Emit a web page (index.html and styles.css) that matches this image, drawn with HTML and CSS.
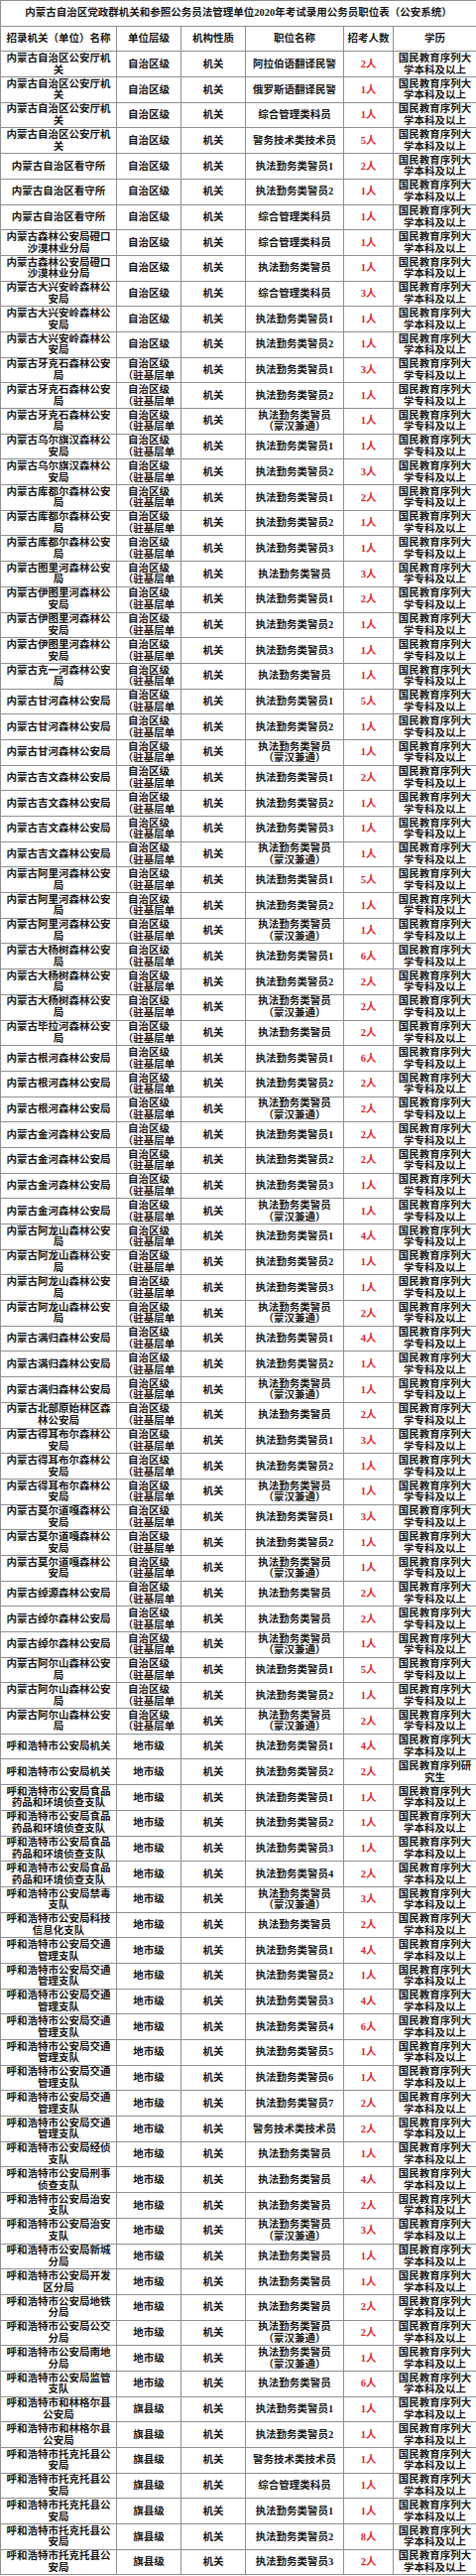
FILE: index.html
```html
<!DOCTYPE html>
<html lang="zh-CN">
<head>
<meta charset="utf-8">
<title>职位表（公安系统）</title>
<link rel="stylesheet" href="styles.css">
</head>
<body>
<table class="jobs">
<colgroup><col class="c1"><col class="c2"><col class="c3"><col class="c4"><col class="c5"><col class="c6"></colgroup>
<thead>
<tr><th colspan="6" class="title">内蒙古自治区党政群机关和参照公务员法管理单位2020年考试录用公务员职位表（公安系统）</th></tr>
<tr><th>招录机关（单位）名称</th><th>单位层级</th><th>机构性质</th><th>职位名称</th><th>招考人数</th><th>学历</th></tr>
</thead>
<tbody>
<tr><td>内蒙古自治区公安厅机关</td><td>自治区级</td><td>机关</td><td>阿拉伯语翻译民警</td><td class="n">2人</td><td>国民教育序列大学本科及以上</td></tr>
<tr><td>内蒙古自治区公安厅机关</td><td>自治区级</td><td>机关</td><td>俄罗斯语翻译民警</td><td class="n">1人</td><td>国民教育序列大学本科及以上</td></tr>
<tr><td>内蒙古自治区公安厅机关</td><td>自治区级</td><td>机关</td><td>综合管理类科员</td><td class="n">1人</td><td>国民教育序列大学本科及以上</td></tr>
<tr><td>内蒙古自治区公安厅机关</td><td>自治区级</td><td>机关</td><td>警务技术类技术员</td><td class="n">5人</td><td>国民教育序列大学本科及以上</td></tr>
<tr><td>内蒙古自治区看守所</td><td>自治区级</td><td>机关</td><td>执法勤务类警员1</td><td class="n">2人</td><td>国民教育序列大学本科及以上</td></tr>
<tr><td>内蒙古自治区看守所</td><td>自治区级</td><td>机关</td><td>执法勤务类警员2</td><td class="n">1人</td><td>国民教育序列大学本科及以上</td></tr>
<tr><td>内蒙古自治区看守所</td><td>自治区级</td><td>机关</td><td>综合管理类科员</td><td class="n">1人</td><td>国民教育序列大学本科及以上</td></tr>
<tr><td>内蒙古森林公安局磴口沙漠林业分局</td><td>自治区级</td><td>机关</td><td>综合管理类科员</td><td class="n">1人</td><td>国民教育序列大学本科及以上</td></tr>
<tr><td>内蒙古森林公安局磴口沙漠林业分局</td><td>自治区级</td><td>机关</td><td>执法勤务类警员</td><td class="n">1人</td><td>国民教育序列大学本科及以上</td></tr>
<tr><td>内蒙古大兴安岭森林公安局</td><td>自治区级</td><td>机关</td><td>综合管理类科员</td><td class="n">3人</td><td>国民教育序列大学本科及以上</td></tr>
<tr><td>内蒙古大兴安岭森林公安局</td><td>自治区级</td><td>机关</td><td>执法勤务类警员1</td><td class="n">1人</td><td>国民教育序列大学本科及以上</td></tr>
<tr><td>内蒙古大兴安岭森林公安局</td><td>自治区级</td><td>机关</td><td>执法勤务类警员2</td><td class="n">1人</td><td>国民教育序列大学本科及以上</td></tr>
<tr><td>内蒙古牙克石森林公安局</td><td>自治区级<br>（驻基层单</td><td>机关</td><td>执法勤务类警员1</td><td class="n">3人</td><td>国民教育序列大学专科及以上</td></tr>
<tr><td>内蒙古牙克石森林公安局</td><td>自治区级<br>（驻基层单</td><td>机关</td><td>执法勤务类警员2</td><td class="n">1人</td><td>国民教育序列大学专科及以上</td></tr>
<tr><td>内蒙古牙克石森林公安局</td><td>自治区级<br>（驻基层单</td><td>机关</td><td>执法勤务类警员<br>（蒙汉兼通）</td><td class="n">1人</td><td>国民教育序列大学专科及以上</td></tr>
<tr><td>内蒙古乌尔旗汉森林公安局</td><td>自治区级<br>（驻基层单</td><td>机关</td><td>执法勤务类警员1</td><td class="n">1人</td><td>国民教育序列大学专科及以上</td></tr>
<tr><td>内蒙古乌尔旗汉森林公安局</td><td>自治区级<br>（驻基层单</td><td>机关</td><td>执法勤务类警员2</td><td class="n">3人</td><td>国民教育序列大学专科及以上</td></tr>
<tr><td>内蒙古库都尔森林公安局</td><td>自治区级<br>（驻基层单</td><td>机关</td><td>执法勤务类警员1</td><td class="n">2人</td><td>国民教育序列大学专科及以上</td></tr>
<tr><td>内蒙古库都尔森林公安局</td><td>自治区级<br>（驻基层单</td><td>机关</td><td>执法勤务类警员2</td><td class="n">1人</td><td>国民教育序列大学专科及以上</td></tr>
<tr><td>内蒙古库都尔森林公安局</td><td>自治区级<br>（驻基层单</td><td>机关</td><td>执法勤务类警员3</td><td class="n">1人</td><td>国民教育序列大学专科及以上</td></tr>
<tr><td>内蒙古图里河森林公安局</td><td>自治区级<br>（驻基层单</td><td>机关</td><td>执法勤务类警员</td><td class="n">3人</td><td>国民教育序列大学专科及以上</td></tr>
<tr><td>内蒙古伊图里河森林公安局</td><td>自治区级<br>（驻基层单</td><td>机关</td><td>执法勤务类警员1</td><td class="n">2人</td><td>国民教育序列大学专科及以上</td></tr>
<tr><td>内蒙古伊图里河森林公安局</td><td>自治区级<br>（驻基层单</td><td>机关</td><td>执法勤务类警员2</td><td class="n">1人</td><td>国民教育序列大学专科及以上</td></tr>
<tr><td>内蒙古伊图里河森林公安局</td><td>自治区级<br>（驻基层单</td><td>机关</td><td>执法勤务类警员3</td><td class="n">1人</td><td>国民教育序列大学专科及以上</td></tr>
<tr><td>内蒙古克一河森林公安局</td><td>自治区级<br>（驻基层单</td><td>机关</td><td>执法勤务类警员</td><td class="n">1人</td><td>国民教育序列大学专科及以上</td></tr>
<tr><td>内蒙古甘河森林公安局</td><td>自治区级<br>（驻基层单</td><td>机关</td><td>执法勤务类警员1</td><td class="n">5人</td><td>国民教育序列大学专科及以上</td></tr>
<tr><td>内蒙古甘河森林公安局</td><td>自治区级<br>（驻基层单</td><td>机关</td><td>执法勤务类警员2</td><td class="n">1人</td><td>国民教育序列大学专科及以上</td></tr>
<tr><td>内蒙古甘河森林公安局</td><td>自治区级<br>（驻基层单</td><td>机关</td><td>执法勤务类警员<br>（蒙汉兼通）</td><td class="n">1人</td><td>国民教育序列大学专科及以上</td></tr>
<tr><td>内蒙古吉文森林公安局</td><td>自治区级<br>（驻基层单</td><td>机关</td><td>执法勤务类警员1</td><td class="n">2人</td><td>国民教育序列大学专科及以上</td></tr>
<tr><td>内蒙古吉文森林公安局</td><td>自治区级<br>（驻基层单</td><td>机关</td><td>执法勤务类警员2</td><td class="n">1人</td><td>国民教育序列大学专科及以上</td></tr>
<tr><td>内蒙古吉文森林公安局</td><td>自治区级<br>（驻基层单</td><td>机关</td><td>执法勤务类警员3</td><td class="n">1人</td><td>国民教育序列大学专科及以上</td></tr>
<tr><td>内蒙古吉文森林公安局</td><td>自治区级<br>（驻基层单</td><td>机关</td><td>执法勤务类警员<br>（蒙汉兼通）</td><td class="n">1人</td><td>国民教育序列大学专科及以上</td></tr>
<tr><td>内蒙古阿里河森林公安局</td><td>自治区级<br>（驻基层单</td><td>机关</td><td>执法勤务类警员1</td><td class="n">5人</td><td>国民教育序列大学专科及以上</td></tr>
<tr><td>内蒙古阿里河森林公安局</td><td>自治区级<br>（驻基层单</td><td>机关</td><td>执法勤务类警员2</td><td class="n">1人</td><td>国民教育序列大学专科及以上</td></tr>
<tr><td>内蒙古阿里河森林公安局</td><td>自治区级<br>（驻基层单</td><td>机关</td><td>执法勤务类警员<br>（蒙汉兼通）</td><td class="n">1人</td><td>国民教育序列大学专科及以上</td></tr>
<tr><td>内蒙古大杨树森林公安局</td><td>自治区级<br>（驻基层单</td><td>机关</td><td>执法勤务类警员1</td><td class="n">6人</td><td>国民教育序列大学专科及以上</td></tr>
<tr><td>内蒙古大杨树森林公安局</td><td>自治区级<br>（驻基层单</td><td>机关</td><td>执法勤务类警员2</td><td class="n">2人</td><td>国民教育序列大学专科及以上</td></tr>
<tr><td>内蒙古大杨树森林公安局</td><td>自治区级<br>（驻基层单</td><td>机关</td><td>执法勤务类警员<br>（蒙汉兼通）</td><td class="n">2人</td><td>国民教育序列大学专科及以上</td></tr>
<tr><td>内蒙古毕拉河森林公安局</td><td>自治区级<br>（驻基层单</td><td>机关</td><td>执法勤务类警员</td><td class="n">2人</td><td>国民教育序列大学专科及以上</td></tr>
<tr><td>内蒙古根河森林公安局</td><td>自治区级<br>（驻基层单</td><td>机关</td><td>执法勤务类警员1</td><td class="n">6人</td><td>国民教育序列大学专科及以上</td></tr>
<tr><td>内蒙古根河森林公安局</td><td>自治区级<br>（驻基层单</td><td>机关</td><td>执法勤务类警员2</td><td class="n">2人</td><td>国民教育序列大学专科及以上</td></tr>
<tr><td>内蒙古根河森林公安局</td><td>自治区级<br>（驻基层单</td><td>机关</td><td>执法勤务类警员<br>（蒙汉兼通）</td><td class="n">2人</td><td>国民教育序列大学专科及以上</td></tr>
<tr><td>内蒙古金河森林公安局</td><td>自治区级<br>（驻基层单</td><td>机关</td><td>执法勤务类警员1</td><td class="n">2人</td><td>国民教育序列大学专科及以上</td></tr>
<tr><td>内蒙古金河森林公安局</td><td>自治区级<br>（驻基层单</td><td>机关</td><td>执法勤务类警员2</td><td class="n">2人</td><td>国民教育序列大学专科及以上</td></tr>
<tr><td>内蒙古金河森林公安局</td><td>自治区级<br>（驻基层单</td><td>机关</td><td>执法勤务类警员3</td><td class="n">1人</td><td>国民教育序列大学专科及以上</td></tr>
<tr><td>内蒙古金河森林公安局</td><td>自治区级<br>（驻基层单</td><td>机关</td><td>执法勤务类警员<br>（蒙汉兼通）</td><td class="n">1人</td><td>国民教育序列大学专科及以上</td></tr>
<tr><td>内蒙古阿龙山森林公安局</td><td>自治区级<br>（驻基层单</td><td>机关</td><td>执法勤务类警员1</td><td class="n">4人</td><td>国民教育序列大学专科及以上</td></tr>
<tr><td>内蒙古阿龙山森林公安局</td><td>自治区级<br>（驻基层单</td><td>机关</td><td>执法勤务类警员2</td><td class="n">1人</td><td>国民教育序列大学专科及以上</td></tr>
<tr><td>内蒙古阿龙山森林公安局</td><td>自治区级<br>（驻基层单</td><td>机关</td><td>执法勤务类警员3</td><td class="n">1人</td><td>国民教育序列大学专科及以上</td></tr>
<tr><td>内蒙古阿龙山森林公安局</td><td>自治区级<br>（驻基层单</td><td>机关</td><td>执法勤务类警员<br>（蒙汉兼通）</td><td class="n">2人</td><td>国民教育序列大学专科及以上</td></tr>
<tr><td>内蒙古满归森林公安局</td><td>自治区级<br>（驻基层单</td><td>机关</td><td>执法勤务类警员1</td><td class="n">4人</td><td>国民教育序列大学专科及以上</td></tr>
<tr><td>内蒙古满归森林公安局</td><td>自治区级<br>（驻基层单</td><td>机关</td><td>执法勤务类警员2</td><td class="n">1人</td><td>国民教育序列大学专科及以上</td></tr>
<tr><td>内蒙古满归森林公安局</td><td>自治区级<br>（驻基层单</td><td>机关</td><td>执法勤务类警员<br>（蒙汉兼通）</td><td class="n">1人</td><td>国民教育序列大学专科及以上</td></tr>
<tr><td>内蒙古北部原始林区森林公安局</td><td>自治区级<br>（驻基层单</td><td>机关</td><td>执法勤务类警员</td><td class="n">2人</td><td>国民教育序列大学专科及以上</td></tr>
<tr><td>内蒙古得耳布尔森林公安局</td><td>自治区级<br>（驻基层单</td><td>机关</td><td>执法勤务类警员1</td><td class="n">3人</td><td>国民教育序列大学专科及以上</td></tr>
<tr><td>内蒙古得耳布尔森林公安局</td><td>自治区级<br>（驻基层单</td><td>机关</td><td>执法勤务类警员2</td><td class="n">1人</td><td>国民教育序列大学专科及以上</td></tr>
<tr><td>内蒙古得耳布尔森林公安局</td><td>自治区级<br>（驻基层单</td><td>机关</td><td>执法勤务类警员<br>（蒙汉兼通）</td><td class="n">1人</td><td>国民教育序列大学专科及以上</td></tr>
<tr><td>内蒙古莫尔道嘎森林公安局</td><td>自治区级<br>（驻基层单</td><td>机关</td><td>执法勤务类警员1</td><td class="n">3人</td><td>国民教育序列大学专科及以上</td></tr>
<tr><td>内蒙古莫尔道嘎森林公安局</td><td>自治区级<br>（驻基层单</td><td>机关</td><td>执法勤务类警员2</td><td class="n">1人</td><td>国民教育序列大学专科及以上</td></tr>
<tr><td>内蒙古莫尔道嘎森林公安局</td><td>自治区级<br>（驻基层单</td><td>机关</td><td>执法勤务类警员<br>（蒙汉兼通）</td><td class="n">1人</td><td>国民教育序列大学专科及以上</td></tr>
<tr><td>内蒙古绰源森林公安局</td><td>自治区级<br>（驻基层单</td><td>机关</td><td>执法勤务类警员</td><td class="n">2人</td><td>国民教育序列大学专科及以上</td></tr>
<tr><td>内蒙古绰尔森林公安局</td><td>自治区级<br>（驻基层单</td><td>机关</td><td>执法勤务类警员</td><td class="n">2人</td><td>国民教育序列大学专科及以上</td></tr>
<tr><td>内蒙古绰尔森林公安局</td><td>自治区级<br>（驻基层单</td><td>机关</td><td>执法勤务类警员<br>（蒙汉兼通）</td><td class="n">1人</td><td>国民教育序列大学专科及以上</td></tr>
<tr><td>内蒙古阿尔山森林公安局</td><td>自治区级<br>（驻基层单</td><td>机关</td><td>执法勤务类警员1</td><td class="n">5人</td><td>国民教育序列大学专科及以上</td></tr>
<tr><td>内蒙古阿尔山森林公安局</td><td>自治区级<br>（驻基层单</td><td>机关</td><td>执法勤务类警员2</td><td class="n">1人</td><td>国民教育序列大学专科及以上</td></tr>
<tr><td>内蒙古阿尔山森林公安局</td><td>自治区级<br>（驻基层单</td><td>机关</td><td>执法勤务类警员<br>（蒙汉兼通）</td><td class="n">2人</td><td>国民教育序列大学专科及以上</td></tr>
<tr><td>呼和浩特市公安局机关</td><td>地市级</td><td>机关</td><td>执法勤务类警员1</td><td class="n">4人</td><td>国民教育序列大学本科及以上</td></tr>
<tr><td>呼和浩特市公安局机关</td><td>地市级</td><td>机关</td><td>执法勤务类警员2</td><td class="n">2人</td><td>国民教育序列研究生</td></tr>
<tr><td>呼和浩特市公安局食品药品和环境侦查支队</td><td>地市级</td><td>机关</td><td>执法勤务类警员1</td><td class="n">1人</td><td>国民教育序列大学本科及以上</td></tr>
<tr><td>呼和浩特市公安局食品药品和环境侦查支队</td><td>地市级</td><td>机关</td><td>执法勤务类警员2</td><td class="n">1人</td><td>国民教育序列大学本科及以上</td></tr>
<tr><td>呼和浩特市公安局食品药品和环境侦查支队</td><td>地市级</td><td>机关</td><td>执法勤务类警员3</td><td class="n">1人</td><td>国民教育序列大学本科及以上</td></tr>
<tr><td>呼和浩特市公安局食品药品和环境侦查支队</td><td>地市级</td><td>机关</td><td>执法勤务类警员4</td><td class="n">2人</td><td>国民教育序列大学本科及以上</td></tr>
<tr><td>呼和浩特市公安局禁毒支队</td><td>地市级</td><td>机关</td><td>执法勤务类警员<br>（蒙汉兼通）</td><td class="n">3人</td><td>国民教育序列大学本科及以上</td></tr>
<tr><td>呼和浩特市公安局科技信息化支队</td><td>地市级</td><td>机关</td><td>执法勤务类警员</td><td class="n">2人</td><td>国民教育序列大学本科及以上</td></tr>
<tr><td>呼和浩特市公安局交通管理支队</td><td>地市级</td><td>机关</td><td>执法勤务类警员1</td><td class="n">4人</td><td>国民教育序列大学本科及以上</td></tr>
<tr><td>呼和浩特市公安局交通管理支队</td><td>地市级</td><td>机关</td><td>执法勤务类警员2</td><td class="n">1人</td><td>国民教育序列大学本科及以上</td></tr>
<tr><td>呼和浩特市公安局交通管理支队</td><td>地市级</td><td>机关</td><td>执法勤务类警员3</td><td class="n">4人</td><td>国民教育序列大学本科及以上</td></tr>
<tr><td>呼和浩特市公安局交通管理支队</td><td>地市级</td><td>机关</td><td>执法勤务类警员4</td><td class="n">6人</td><td>国民教育序列大学本科及以上</td></tr>
<tr><td>呼和浩特市公安局交通管理支队</td><td>地市级</td><td>机关</td><td>执法勤务类警员5</td><td class="n">1人</td><td>国民教育序列大学本科及以上</td></tr>
<tr><td>呼和浩特市公安局交通管理支队</td><td>地市级</td><td>机关</td><td>执法勤务类警员6</td><td class="n">1人</td><td>国民教育序列大学本科及以上</td></tr>
<tr><td>呼和浩特市公安局交通管理支队</td><td>地市级</td><td>机关</td><td>执法勤务类警员7</td><td class="n">2人</td><td>国民教育序列大学本科及以上</td></tr>
<tr><td>呼和浩特市公安局交通管理支队</td><td>地市级</td><td>机关</td><td>警务技术类技术员</td><td class="n">2人</td><td>国民教育序列大学本科及以上</td></tr>
<tr><td>呼和浩特市公安局经侦支队</td><td>地市级</td><td>机关</td><td>执法勤务类警员</td><td class="n">1人</td><td>国民教育序列大学本科及以上</td></tr>
<tr><td>呼和浩特市公安局刑事侦查支队</td><td>地市级</td><td>机关</td><td>执法勤务类警员</td><td class="n">4人</td><td>国民教育序列大学本科及以上</td></tr>
<tr><td>呼和浩特市公安局治安支队</td><td>地市级</td><td>机关</td><td>执法勤务类警员</td><td class="n">2人</td><td>国民教育序列大学本科及以上</td></tr>
<tr><td>呼和浩特市公安局治安支队</td><td>地市级</td><td>机关</td><td>执法勤务类警员<br>（蒙汉兼通）</td><td class="n">3人</td><td>国民教育序列大学本科及以上</td></tr>
<tr><td>呼和浩特市公安局新城分局</td><td>地市级</td><td>机关</td><td>执法勤务类警员</td><td class="n">1人</td><td>国民教育序列大学本科及以上</td></tr>
<tr><td>呼和浩特市公安局开发区分局</td><td>地市级</td><td>机关</td><td>执法勤务类警员</td><td class="n">1人</td><td>国民教育序列大学本科及以上</td></tr>
<tr><td>呼和浩特市公安局地铁分局</td><td>地市级</td><td>机关</td><td>执法勤务类警员</td><td class="n">2人</td><td>国民教育序列大学本科及以上</td></tr>
<tr><td>呼和浩特市公安局公交分局</td><td>地市级</td><td>机关</td><td>执法勤务类警员<br>（蒙汉兼通）</td><td class="n">2人</td><td>国民教育序列大学本科及以上</td></tr>
<tr><td>呼和浩特市公安局南地分局</td><td>地市级</td><td>机关</td><td>执法勤务类警员<br>（蒙汉兼通）</td><td class="n">1人</td><td>国民教育序列大学本科及以上</td></tr>
<tr><td>呼和浩特市公安局监管支队</td><td>地市级</td><td>机关</td><td>执法勤务类警员</td><td class="n">6人</td><td>国民教育序列大学本科及以上</td></tr>
<tr><td>呼和浩特市和林格尔县公安局</td><td>旗县级</td><td>机关</td><td>执法勤务类警员1</td><td class="n">1人</td><td>国民教育序列大学本科及以上</td></tr>
<tr><td>呼和浩特市和林格尔县公安局</td><td>旗县级</td><td>机关</td><td>执法勤务类警员2</td><td class="n">1人</td><td>国民教育序列大学本科及以上</td></tr>
<tr><td>呼和浩特市托克托县公安局</td><td>旗县级</td><td>机关</td><td>警务技术类技术员</td><td class="n">1人</td><td>国民教育序列大学本科及以上</td></tr>
<tr><td>呼和浩特市托克托县公安局</td><td>旗县级</td><td>机关</td><td>综合管理类科员</td><td class="n">1人</td><td>国民教育序列大学本科及以上</td></tr>
<tr><td>呼和浩特市托克托县公安局</td><td>旗县级</td><td>机关</td><td>执法勤务类警员1</td><td class="n">1人</td><td>国民教育序列大学本科及以上</td></tr>
<tr><td>呼和浩特市托克托县公安局</td><td>旗县级</td><td>机关</td><td>执法勤务类警员2</td><td class="n">8人</td><td>国民教育序列大学本科及以上</td></tr>
<tr><td>呼和浩特市托克托县公安局</td><td>旗县级</td><td>机关</td><td>执法勤务类警员3</td><td class="n">2人</td><td>国民教育序列大学本科及以上</td></tr>
</tbody>
</table>
</body>
</html>
```
FILE: styles.css
```css
html, body {
  margin: 0;
  padding: 0;
  background: #ffffff;
}

body {
  font-family: "Liberation Serif", "Noto Sans CJK SC", serif;
  font-size: 10.5px;
  font-weight: bold;
  color: #161616;
}

.jobs {
  width: 480px;
  border-collapse: collapse;
  table-layout: fixed;
}

.c1 { width: 117px; }
.c2 { width: 65px; }
.c3 { width: 65px; }
.c4 { width: 99px; }
.c5 { width: 50px; }
.c6 { width: 84px; }

.jobs tr {
  height: 25.7px;
}

.jobs th,
.jobs td {
  border: 1px solid #8e8e8e;
  padding: 0 2px;
  text-align: center;
  vertical-align: middle;
  line-height: 11.7px;
  font-weight: bold;
  overflow: hidden;
}

.jobs .title {
  padding: 0;
  white-space: nowrap;
}

.jobs .n {
  color: #e3262b;
}
```
